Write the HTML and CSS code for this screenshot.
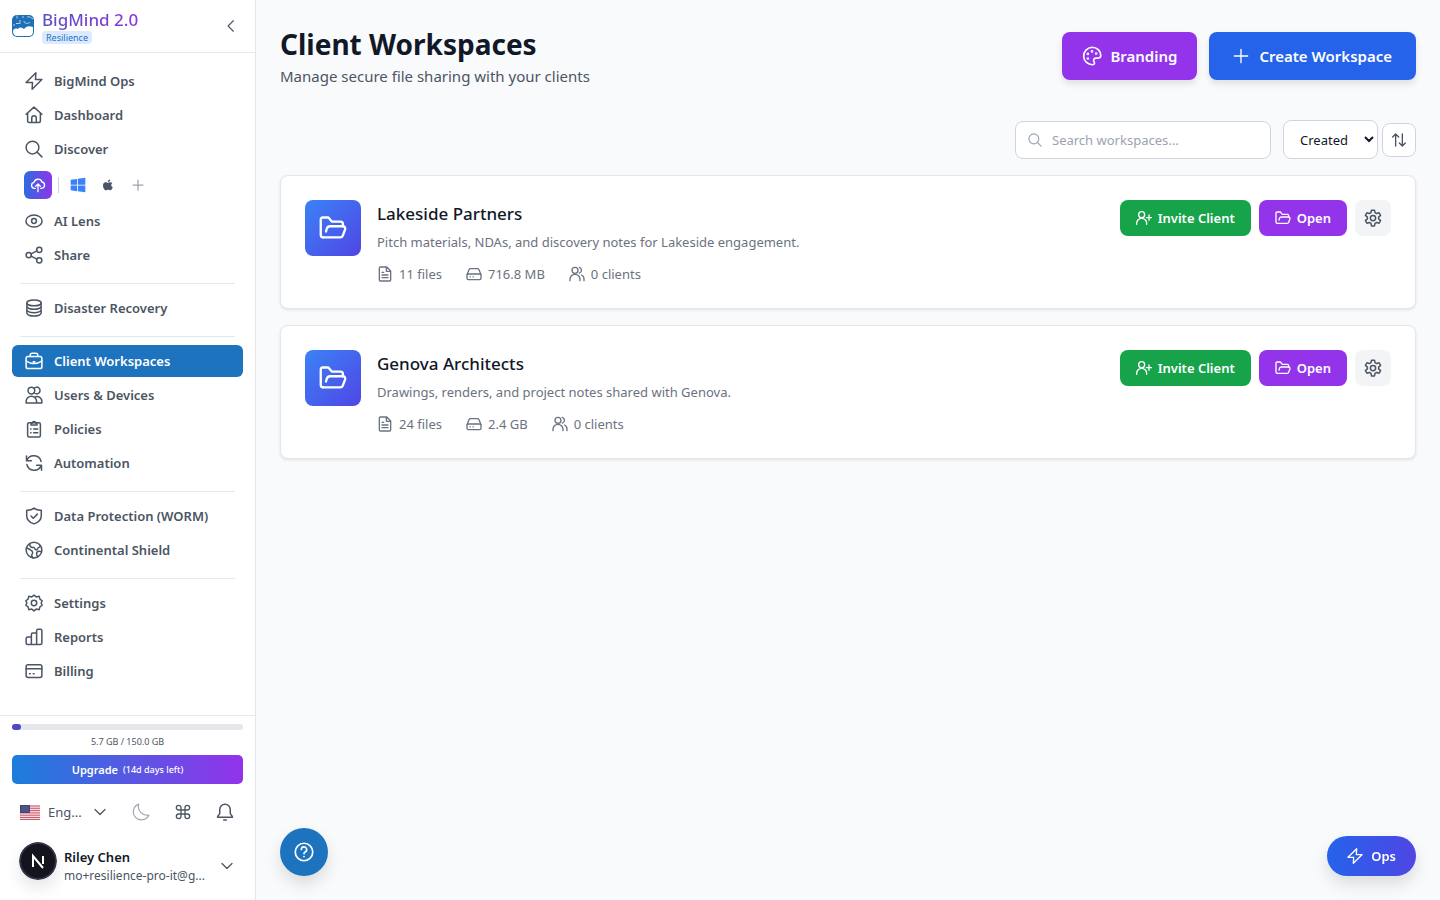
FILE: index.html
```html
<!DOCTYPE html>
<html lang="en">
<head>
    <meta charset="UTF-8">
    <meta name="viewport" content="width=device-width, initial-scale=1.0">
    <title>Client Workspaces - BigMind</title>
    <link rel="stylesheet" href="styles.css">
</head>
<body>
    <!-- Icon sprite -->
    <svg class="sprite" aria-hidden="true">
        <symbol id="i-bolt" viewBox="0 0 24 24"><path d="M14.500 1 1.500 14H10l-.5 9L22.500 10H14z"/></symbol>
        <symbol id="i-home" viewBox="0 0 24 24"><path d="M1.500 11 12 1.500 22.500 11M3.500 9.500V20a2 2 0 0 0 2 2H9v-6a3 3 0 0 1 6 0v6h3.500a2 2 0 0 0 2-2V9.500M9 22h6"/></symbol>
        <symbol id="i-search" viewBox="0 0 24 24"><circle cx="10" cy="10" r="8.500"/><path d="m16 16 6.500 6.500"/></symbol>
        <symbol id="i-cloud-up" viewBox="0 0 24 24"><path d="M8 17H6.500A4.500 4.500 0 0 1 6 8.100 6.200 6.200 0 0 1 17.900 7.500 4.800 4.800 0 0 1 17.500 17H16M12 22V11M8.500 14 12 10.500l3.500 3.500"/></symbol>
        <symbol id="i-windows" viewBox="0 0 24 24"><path fill="currentColor" stroke="none" d="M1 4.200 10.500 2.900V11.500H1zM11.700 2.700 23 1v10.500H11.700zM1 12.600h9.500v8.600L1 19.900zM11.700 12.600H23V23l-11.300-1.600z"/></symbol>
        <symbol id="i-apple" viewBox="0 0 24 24"><path fill="currentColor" stroke="none" d="M16.500 1c.1 2.800-2.200 5.100-4.800 5C11.400 3.400 13.800 1.100 16.500 1zM20.800 8.200c-3.600 2.200-3 7 .8 8.500-1 2.800-3 6-5 6-1.800 0-2.200-1-4.200-1s-2.600 1-4.300 1C5.200 22.700 2 17.300 2 13c0-4.200 2.700-6.500 5.300-6.500 1.900 0 3.400 1.200 4.600 1.200 1.100 0 2.900-1.300 5.100-1.300 1.500 0 2.900.7 3.800 1.800z"/></symbol>
        <symbol id="i-plus" viewBox="0 0 24 24"><path d="M12 2v20M2 12h20"/></symbol>
        <symbol id="i-eye" viewBox="0 0 24 24"><ellipse cx="12" cy="12" rx="10.800" ry="8"/><circle cx="12" cy="12" r="3.200"/></symbol>
        <symbol id="i-share" viewBox="0 0 24 24"><circle cx="5" cy="12" r="3.500"/><circle cx="19" cy="5" r="3.500"/><circle cx="19" cy="19" r="3.500"/><path d="m8.200 10.500 7.600-3.900M8.200 13.500l7.600 3.900"/></symbol>
        <symbol id="i-database" viewBox="0 0 24 24"><ellipse cx="12" cy="5.200" rx="9.500" ry="3.800"/><path d="M2.500 5.200v13.600c0 2.200 4.300 4 9.500 4s9.500-1.800 9.500-4V5.200M2.500 9.800c0 2.200 4.300 4 9.500 4s9.500-1.800 9.500-4M2.500 14.300c0 2.200 4.300 4 9.500 4s9.500-1.800 9.500-4"/></symbol>
        <symbol id="i-briefcase" viewBox="0 0 24 24"><rect x="1.500" y="6" width="21" height="16" rx="2.500"/><path d="M7 6V4a2.500 2.500 0 0 1 2.500-2.500h5A2.500 2.500 0 0 1 17 4v2M1.500 12c6 4.500 15 4.500 21 0M11 13h2"/></symbol>
        <symbol id="i-users" viewBox="0 0 24 24"><circle cx="8.500" cy="6" r="4.500"/><path d="M12 3.200a4.500 4.500 0 1 1 0 5.600M1.500 22.500v-2a7 7 0 0 1 14 0v2zM13.500 14.500a6.500 6.500 0 0 1 9 6v2h-7"/></symbol>
        <symbol id="i-clipboard" viewBox="0 0 24 24"><rect x="3.500" y="3.500" width="17" height="19" rx="2"/><path d="M8 6.500V4h2a2 2 0 0 1 4 0h2v2.500zM11.500 12H17M11.500 17H17M7.500 12h.5M7.500 17h.5"/></symbol>
        <symbol id="i-sync" viewBox="0 0 24 24"><path d="M2 2.500V9h6.500M22 21.500V15h-6.500M2.500 8.500A10 10 0 0 1 21.500 10M21.500 15.500A10 10 0 0 1 2.500 14"/></symbol>
        <symbol id="i-shield" viewBox="0 0 24 24"><path d="M12 1.500c2.500 2 6 3 9.700 2.800v7.200c0 5.500-4 9-9.700 11-5.700-2-9.700-5.500-9.700-11V4.300C6 4.500 9.500 3.500 12 1.500z"/><path d="m8 12 3 3 5.500-5.500"/></symbol>
        <symbol id="i-globe" viewBox="0 0 24 24"><circle cx="12" cy="12" r="10.500"/><path d="M6.500 3.500C6 7 8 9 11 8.500c2-.3 2 3.500 4 3.500s1.500-3 3.500-3.500S20 6 20 6M2 9.500c3 0 4 2 6 3s3 3 1.500 5 0 4 1 5M22 14.500c-2.500-1.500-6-1-6.500 1.500s.5 3.500 1.500 5"/></symbol>
        <symbol id="i-cog" viewBox="0 0 24 24"><path d="m12 1.500 3 2.400 3.900-.8 1 3.700 3 2.200-1.400 3 1.400 3-3 2.200-1 3.700-3.900-.8-3 2.400-3-2.400-3.900.8-1-3.700-3-2.200 1.400-3-1.400-3 3-2.200 1-3.700 3.900.8z"/><circle cx="12" cy="12" r="3.600"/></symbol>
        <symbol id="i-chart" viewBox="0 0 24 24"><path d="M8.500 22V8.500A2 2 0 0 1 10.500 6.500h5M8.500 22H3.500a2 2 0 0 1-2-2v-6a2 2 0 0 1 2-2h5M8.500 22h7M15.500 22V3.500a2 2 0 0 1 2-2h3a2 2 0 0 1 2 2V20a2 2 0 0 1-2 2z"/></symbol>
        <symbol id="i-card" viewBox="0 0 24 24"><rect x="1.500" y="3.500" width="21" height="17" rx="2.500"/><path d="M1.500 9h21M6 15.500h1M11 15.500h1"/></symbol>
        <symbol id="i-left" viewBox="0 0 24 24"><path d="m16 3-9 9 9 9"/></symbol>
        <symbol id="i-down" viewBox="0 0 24 24"><path d="m2 7 10 10L22 7"/></symbol>
        <symbol id="i-moon" viewBox="0 0 24 24"><path d="M9 1.500A10.800 10.800 0 1 0 22.500 16 11.500 11.500 0 0 1 9 1.500z"/></symbol>
        <symbol id="i-command" viewBox="0 0 24 24"><path d="M9 9h6v6H9zM9 9H5.500A3.500 3.500 0 1 1 9 5.500zM15 9V5.500A3.500 3.500 0 1 1 18.500 9zM15 15h3.500a3.500 3.500 0 1 1-3.500 3.500zM9 15v3.500A3.500 3.500 0 1 1 5.500 15z"/></symbol>
        <symbol id="i-bell" viewBox="0 0 24 24"><path d="M12 1.500a7 7 0 0 0-7 7v5c0 2-3 3-3 5.500h20c0-2.500-3-3.500-3-5.500v-5a7 7 0 0 0-7-7zM10.300 22.500h3.400"/></symbol>
        <symbol id="i-palette" viewBox="0 0 24 24"><path d="M12 1.500a10.500 10.500 0 1 0 1 21c2 0 2.500-1.800 1.500-3.500-1.500-2.600 0-4.500 2.500-4.500h2.500c2 0 3-1 3-3C22.500 6 18 1.500 12 1.500z"/><circle cx="7" cy="9.500" r=".6"/><circle cx="12" cy="6.500" r=".6"/><circle cx="17" cy="9" r=".6"/><circle cx="7" cy="15" r=".6"/></symbol>
        <symbol id="i-sort" viewBox="0 0 24 24"><path d="M7 21V3M2.500 7.500 7 3l4.500 4.500M17 3v18M12.500 16.500 17 21l4.500-4.500"/></symbol>
        <symbol id="i-folder" viewBox="0 0 24 24"><path d="M3.500 20A2 2 0 0 1 1.500 18V4.500A1.500 1.500 0 0 1 3 3h5l3 3.500h7.500a2 2 0 0 1 2 2v2"/><path d="M3.500 20h15a2 2 0 0 0 1.900-1.400l2-5.500a2 2 0 0 0-1.900-2.600H9.500a3 3 0 0 0-2.800 2L6 15"/></symbol>
        <symbol id="i-file" viewBox="0 0 24 24"><path d="M14.500 1.500H5A1.500 1.500 0 0 0 3.500 3v18A1.500 1.500 0 0 0 5 22.500h14a1.500 1.500 0 0 0 1.500-1.500V7.500zM14 1.500V8h6.500M7.500 9.500H10M7.500 13.500h9M7.500 17.500h9"/></symbol>
        <symbol id="i-drive" viewBox="0 0 24 24"><path d="M1.500 13 4.500 5.500A2.500 2.500 0 0 1 7 4h10a2.500 2.500 0 0 1 2.500 1.500l3 7.500"/><rect x="1.500" y="12" width="21" height="8.500" rx="2"/><path d="M6 16.300h.5M10.500 16.300h.5"/></symbol>
        <symbol id="i-clients" viewBox="0 0 24 24"><circle cx="9" cy="6.500" r="4.500"/><path d="M1.500 22v-2a7.500 7.500 0 0 1 15 0v2M15.500 2.200a4.500 4.500 0 0 1 0 8.600M19 13.500a7 7 0 0 1 3.500 6.500v2"/></symbol>
        <symbol id="i-invite" viewBox="0 0 24 24"><circle cx="8.500" cy="7" r="4.500"/><path d="M1 21.500V20a7.500 7.500 0 0 1 15 0v1.500M19.500 7.500v8M15.500 11.500h8"/></symbol>
        <symbol id="i-gear" viewBox="0 0 24 24"><path d="m10 1.500-.7 3.400-2.100 1.200-3.300-1.100-2 3.500 2.600 2.300v2.400l-2.600 2.300 2 3.500 3.300-1.100 2.100 1.200.7 3.400h4l.7-3.400 2.100-1.200 3.300 1.100 2-3.500-2.600-2.300v-2.400l2.600-2.300-2-3.500-3.300 1.100-2.100-1.200L14 1.500z"/><circle cx="12" cy="12" r="3.500"/></symbol>
        <symbol id="i-help" viewBox="0 0 24 24"><circle cx="12" cy="12" r="10.500"/><path d="M8.800 9a3.200 3.200 0 1 1 4.500 3c-.9.400-1.300 1-1.300 2M12 17.500v.3"/></symbol>
    </svg>

    <div class="app">
        <aside class="sidebar">
            <header class="brand">
                <svg class="brand-logo" viewBox="0 0 24 24" aria-hidden="true">
                    <rect x="1" y="1" width="22" height="22" rx="5" fill="#1e6fb5"/>
                    <path d="M2 17.500c0-2.500 2.500-3.500 5-2.500 1.800-2.500 4.500-1.500 6 .2 1.500-3 5-3.700 9-2.200v5c0 2.500-1.800 4-4 4H6c-2.500 0-4-2-4-4.500z" fill="#fff"/>
                    <path d="M6 1.500v3M5 9.500h4V6M12 2v2M13 7c0 3 5 3 6 1M16 3c3-1 4 1 6 2M2 11h2" fill="none" stroke="#a9d3f2"/>
                </svg>
                <div class="brand-text">
                    <span class="brand-name">BigMind 2.0</span>
                    <span class="brand-plan">Resilience</span>
                </div>
                <button class="icon-button" aria-label="Collapse sidebar"><svg class="icon icon-14"><use href="#i-left"/></svg></button>
            </header>

            <nav class="nav">
                <div class="nav-group">
                    <a class="nav-item" href="#"><svg class="icon icon-18"><use href="#i-bolt"/></svg>BigMind Ops</a>
                    <a class="nav-item" href="#"><svg class="icon icon-18"><use href="#i-home"/></svg>Dashboard</a>
                    <a class="nav-item" href="#"><svg class="icon icon-18"><use href="#i-search"/></svg>Discover</a>
                    <div class="quick-row">
                        <button class="upload-button" aria-label="Upload"><svg class="icon icon-16"><use href="#i-cloud-up"/></svg></button>
                        <span class="quick-sep"></span>
                        <button class="quick-button windows" aria-label="Windows"><svg class="icon icon-16"><use href="#i-windows"/></svg></button>
                        <button class="quick-button" aria-label="Apple"><svg class="icon icon-12"><use href="#i-apple"/></svg></button>
                        <button class="quick-button more" aria-label="More"><svg class="icon icon-12"><use href="#i-plus"/></svg></button>
                    </div>
                    <a class="nav-item" href="#"><svg class="icon icon-18"><use href="#i-eye"/></svg>AI Lens</a>
                    <a class="nav-item" href="#"><svg class="icon icon-18"><use href="#i-share"/></svg>Share</a>
                </div>
                <div class="nav-group">
                    <a class="nav-item" href="#"><svg class="icon icon-18"><use href="#i-database"/></svg>Disaster Recovery</a>
                </div>
                <div class="nav-group">
                    <a class="nav-item active" href="#"><svg class="icon icon-18"><use href="#i-briefcase"/></svg>Client Workspaces</a>
                    <a class="nav-item" href="#"><svg class="icon icon-18"><use href="#i-users"/></svg>Users &amp; Devices</a>
                    <a class="nav-item" href="#"><svg class="icon icon-18"><use href="#i-clipboard"/></svg>Policies</a>
                    <a class="nav-item" href="#"><svg class="icon icon-18"><use href="#i-sync"/></svg>Automation</a>
                </div>
                <div class="nav-group">
                    <a class="nav-item" href="#"><svg class="icon icon-18"><use href="#i-shield"/></svg>Data Protection (WORM)</a>
                    <a class="nav-item" href="#"><svg class="icon icon-18"><use href="#i-globe"/></svg>Continental Shield</a>
                </div>
                <div class="nav-group">
                    <a class="nav-item" href="#"><svg class="icon icon-18"><use href="#i-cog"/></svg>Settings</a>
                    <a class="nav-item" href="#"><svg class="icon icon-18"><use href="#i-chart"/></svg>Reports</a>
                    <a class="nav-item" href="#"><svg class="icon icon-18"><use href="#i-card"/></svg>Billing</a>
                </div>
            </nav>

            <footer class="sidebar-footer">
                <div class="storage-bar"><div class="storage-fill" style="width: 4%"></div></div>
                <div class="storage-text">5.7 GB / 150.0 GB</div>
                <button class="upgrade-button">Upgrade <small>(14d days left)</small></button>
                <div class="tools">
                    <button class="language">
                        <svg class="flag" viewBox="0 0 20 15" aria-hidden="true">
                            <rect width="20" height="15" rx="1" fill="#f3dfe2"/>
                            <path d="M0 1h20M0 3.300h20M0 5.600h20M0 7.900h20M0 10.200h20M0 12.500h20M0 14.500h20" stroke="#d4546a"/>
                            <rect width="10" height="8" fill="#3f4478"/>
                            <path d="M1.500 2h7M1.500 4h7M1.500 6h7" stroke="#9fa3c6" stroke-width=".7" stroke-dasharray="1 1"/>
                        </svg>
                        <span>Eng...</span>
                        <svg class="icon icon-12"><use href="#i-down"/></svg>
                    </button>
                    <button class="icon-button muted" aria-label="Dark mode"><svg class="icon thin icon-18"><use href="#i-moon"/></svg></button>
                    <button class="icon-button" aria-label="Shortcuts"><svg class="icon icon-16"><use href="#i-command"/></svg></button>
                    <button class="icon-button" aria-label="Notifications"><svg class="icon icon-18"><use href="#i-bell"/></svg></button>
                </div>
                <button class="user">
                    <svg class="avatar" viewBox="0 0 38 38" aria-hidden="true">
                        <circle cx="19" cy="19" r="18" fill="#14141f" stroke="#34344a" stroke-width="2"/>
                        <path d="M14 25V14l10 12M24 14v8" fill="none" stroke="#fff" stroke-width="2"/>
                    </svg>
                    <span class="user-text">
                        <span class="user-name">Riley Chen</span>
                        <span class="user-mail">mo+resilience-pro-it@g...</span>
                    </span>
                    <svg class="icon icon-12"><use href="#i-down"/></svg>
                </button>
            </footer>
        </aside>

        <main class="main">
            <div class="page-header">
                <div>
                    <h1>Client Workspaces</h1>
                    <p class="subtitle">Manage secure file sharing with your clients</p>
                </div>
                <div class="header-actions">
                    <button class="button-lg purple"><svg class="icon icon-20"><use href="#i-palette"/></svg>Branding</button>
                    <button class="button-lg blue"><svg class="icon icon-16"><use href="#i-plus"/></svg>Create Workspace</button>
                </div>
            </div>

            <div class="filters">
                <label class="search">
                    <svg class="icon icon-14"><use href="#i-search"/></svg>
                    <input type="text" placeholder="Search workspaces..." aria-label="Search workspaces">
                </label>
                <div class="sort">
                    <select aria-label="Sort by">
                        <option>Created</option>
                        <option>Name</option>
                    </select>
                    <button class="sort-button" aria-label="Sort direction"><svg class="icon icon-16"><use href="#i-sort"/></svg></button>
                </div>
            </div>

            <div class="cards">
                <article class="card">
                    <div class="card-icon"><svg class="icon icon-28"><use href="#i-folder"/></svg></div>
                    <div class="card-body">
                        <h2>Lakeside Partners</h2>
                        <p>Pitch materials, NDAs, and discovery notes for Lakeside engagement.</p>
                        <div class="stats">
                            <span class="stat"><svg class="icon icon-16"><use href="#i-file"/></svg>11 files</span>
                            <span class="stat"><svg class="icon icon-16"><use href="#i-drive"/></svg>716.8 MB</span>
                            <span class="stat"><svg class="icon icon-16"><use href="#i-clients"/></svg>0 clients</span>
                        </div>
                    </div>
                    <div class="card-actions">
                        <button class="button green"><svg class="icon icon-16"><use href="#i-invite"/></svg>Invite Client</button>
                        <button class="button purple"><svg class="icon icon-16"><use href="#i-folder"/></svg>Open</button>
                        <button class="gear-button" aria-label="Workspace settings"><svg class="icon icon-18"><use href="#i-gear"/></svg></button>
                    </div>
                </article>

                <article class="card">
                    <div class="card-icon"><svg class="icon icon-28"><use href="#i-folder"/></svg></div>
                    <div class="card-body">
                        <h2>Genova Architects</h2>
                        <p>Drawings, renders, and project notes shared with Genova.</p>
                        <div class="stats">
                            <span class="stat"><svg class="icon icon-16"><use href="#i-file"/></svg>24 files</span>
                            <span class="stat"><svg class="icon icon-16"><use href="#i-drive"/></svg>2.4 GB</span>
                            <span class="stat"><svg class="icon icon-16"><use href="#i-clients"/></svg>0 clients</span>
                        </div>
                    </div>
                    <div class="card-actions">
                        <button class="button green"><svg class="icon icon-16"><use href="#i-invite"/></svg>Invite Client</button>
                        <button class="button purple"><svg class="icon icon-16"><use href="#i-folder"/></svg>Open</button>
                        <button class="gear-button" aria-label="Workspace settings"><svg class="icon icon-18"><use href="#i-gear"/></svg></button>
                    </div>
                </article>
            </div>
        </main>
    </div>

    <button class="help-button" aria-label="Help"><svg class="icon icon-20"><use href="#i-help"/></svg></button>
    <button class="ops-button"><svg class="icon icon-16"><use href="#i-bolt"/></svg>Ops</button>
</body>
</html>
```
FILE: styles.css
```css
* {
    box-sizing: border-box;
}

body {
    margin: 0;
    font-family: "Noto Sans", sans-serif;
    font-size: 13px;
    line-height: 20px;
    color: #111827;
    background-color: #f9fafc;
}

h1, h2, p {
    margin: 0;
}

a {
    color: inherit;
    text-decoration: none;
}

button, input, select {
    font: inherit;
    color: inherit;
}

button {
    display: flex;
    align-items: center;
    justify-content: center;
    padding: 0;
    border: none;
    background: none;
    cursor: pointer;
}

/* Icons */
.sprite {
    display: none;
}

.icon {
    flex: none;
    fill: none;
    stroke: currentColor;
    stroke-width: 2;
    stroke-linecap: round;
    stroke-linejoin: round;
}

.icon-12 { width: 12px; height: 12px; stroke-width: 2.5; }
.icon-14 { width: 14px; height: 14px; }
.icon-16 { width: 16px; height: 16px; }
.icon-18 { width: 18px; height: 18px; }
.icon-20 { width: 20px; height: 20px; }
.icon-28 { width: 28px; height: 28px; }

.thin {
    stroke-width: 1.5;
}

/* Layout */
.app {
    display: flex;
    min-height: 100vh;
}

.sidebar {
    display: flex;
    flex-direction: column;
    flex: none;
    width: 256px;
    height: 100vh;
    position: sticky;
    top: 0;
    background-color: #fff;
    border-right: 1px solid #e5e7eb;
    color: #4b5563;
}

.brand {
    display: flex;
    align-items: center;
    gap: 7px;
    height: 53px;
    padding: 0 12px 0 11px;
    border-bottom: 1px solid #e5e7eb;
}

.brand-logo {
    width: 24px;
    height: 24px;
}

.brand-text {
    display: flex;
    flex-direction: column;
    align-items: flex-start;
    flex: 1;
}

.brand-name {
    font-size: 17px;
    line-height: 22px;
    font-weight: 500;
    background: linear-gradient(90deg, #5b50c0, #8a38dc);
    -webkit-background-clip: text;
    background-clip: text;
    color: transparent;
}

.brand-plan {
    padding: 0 4px;
    border-radius: 4px;
    background-color: #dbeafe;
    color: #1e73be;
    font-size: 9px;
    line-height: 13px;
}

.icon-button {
    width: 24px;
    height: 24px;
}

.muted {
    color: #9ca3af;
}

/* Navigation */
.nav {
    flex: 1;
    padding: 12px;
    overflow: hidden;
}

.nav-group {
    display: flex;
    flex-direction: column;
    gap: 2px;
}

.nav-group + .nav-group::before {
    content: "";
    height: 1px;
    margin: 12px 8px 6px;
    background-color: #e5e7eb;
}

.nav-item {
    display: flex;
    align-items: center;
    gap: 11px;
    height: 32px;
    padding: 0 13px;
    border-radius: 6px;
    font-weight: 600;
}

.nav-item.active {
    background-color: #1e73be;
    color: #fff;
}

.quick-row {
    display: flex;
    align-items: center;
    height: 36px;
    padding: 0 12px;
}

.upload-button {
    width: 28px;
    height: 28px;
    border-radius: 6px;
    background: linear-gradient(90deg, #2f6be0, #8b37e6);
    color: #fff;
}

.quick-sep {
    width: 1px;
    height: 16px;
    margin: 0 4px 0 6px;
    background-color: #d1d5db;
}

.quick-button {
    width: 30px;
    height: 24px;
}

.windows {
    color: #3b82f6;
}

.more {
    color: #9ca3af;
}

/* Sidebar footer */
.sidebar-footer {
    padding: 8px 12px 10px;
    border-top: 1px solid #e5e7eb;
}

.storage-bar {
    height: 6px;
    border-radius: 3px;
    background-color: #e5e7eb;
}

.storage-fill {
    height: 6px;
    border-radius: 3px;
    background-color: #4f46c8;
}

.storage-text {
    margin: 4px 0 5px;
    font-size: 9px;
    line-height: 16px;
    text-align: center;
}

.upgrade-button {
    gap: 5px;
    width: 100%;
    height: 29px;
    border-radius: 5px;
    background: linear-gradient(90deg, #1a7edb, #9333ea);
    color: #fff;
    font-size: 11px;
    font-weight: 600;
}

.upgrade-button small {
    font-size: 9px;
    font-weight: 500;
}

.tools {
    display: flex;
    align-items: center;
    gap: 18px;
    height: 32px;
    margin-top: 12px;
    padding: 0 6px 0 8px;
}

.language {
    flex: 1;
    justify-content: flex-start;
    gap: 8px;
}

.language .icon {
    margin-left: 4px;
}

.flag {
    width: 20px;
    height: 15px;
}

.user {
    gap: 7px;
    width: 100%;
    height: 48px;
    margin-top: 14px;
    padding: 0 10px 0 7px;
    text-align: left;
}

.avatar {
    align-self: flex-start;
    width: 38px;
    height: 38px;
    border-radius: 50%;
    box-shadow: 0 8px 16px rgba(0, 0, 0, 0.1);
}

.user-text {
    display: flex;
    flex-direction: column;
    flex: 1;
}

.user-name {
    color: #111827;
    font-weight: 600;
}

.user-mail {
    font-size: 12px;
    line-height: 18px;
}

/* Page */
.main {
    flex: 1;
    padding: 24px;
}

.page-header {
    display: flex;
    align-items: center;
    justify-content: space-between;
}

h1 {
    font-size: 28px;
    line-height: 40px;
    font-weight: 700;
}

.subtitle {
    font-size: 15px;
    line-height: 24px;
    color: #4b5563;
}

.header-actions {
    display: flex;
    gap: 12px;
}

.button-lg {
    gap: 8px;
    height: 48px;
    padding: 0 20px;
    border-radius: 8px;
    color: #fff;
    font-size: 15px;
    font-weight: 600;
    box-shadow: 0 4px 6px rgba(0, 0, 0, 0.1);
}

.button-lg.blue {
    gap: 10px;
    padding: 0 24px;
}

.purple {
    background-color: #9333ea;
}

.blue {
    background-color: #2563eb;
}

.green {
    background-color: #16a34a;
}

.filters {
    display: flex;
    align-items: center;
    justify-content: flex-end;
    gap: 12px;
    margin: 32px 0 16px;
}

.search {
    display: flex;
    align-items: center;
    gap: 10px;
    width: 256px;
    height: 38px;
    padding: 0 12px;
    border: 1px solid #d1d5db;
    border-radius: 8px;
    background-color: #fff;
    color: #9ca3af;
}

.search input {
    flex: 1;
    min-width: 0;
    padding: 0;
    border: none;
    outline: none;
    background: none;
    color: #111827;
}

.search input::placeholder {
    color: #9ca3af;
}

.sort {
    display: flex;
    align-items: center;
    gap: 4px;
}

.sort select {
    width: 95px;
    height: 39px;
    padding: 0 0 0 12px;
    border: 1px solid #d1d5db;
    border-radius: 8px;
    background-color: #fff;
}

.sort-button {
    width: 34px;
    height: 34px;
    border: 1px solid #d1d5db;
    border-radius: 8px;
    background-color: #fff;
    color: #4b5563;
}

/* Workspace cards */
.cards {
    display: flex;
    flex-direction: column;
    gap: 16px;
}

.card {
    display: flex;
    align-items: flex-start;
    gap: 16px;
    padding: 24px;
    border: 1px solid #e5e7eb;
    border-radius: 8px;
    background-color: #fff;
    box-shadow: 0 1px 3px rgba(0, 0, 0, 0.1);
}

.card-icon {
    display: flex;
    align-items: center;
    justify-content: center;
    width: 56px;
    height: 56px;
    border-radius: 8px;
    background: linear-gradient(135deg, #3b82f6, #4f46e5);
    color: #fff;
}

.card-body {
    flex: 1;
    color: #6b7280;
}

.card-body h2 {
    margin-bottom: 4px;
    font-size: 17px;
    line-height: 28px;
    font-weight: 500;
    color: #111827;
}

.stats {
    display: flex;
    gap: 24px;
    margin-top: 12px;
}

.stat {
    display: flex;
    align-items: center;
    gap: 6px;
}

.card-actions {
    display: flex;
    gap: 8px;
}

.button {
    gap: 6px;
    height: 36px;
    padding: 0 16px;
    border-radius: 8px;
    color: #fff;
    font-weight: 600;
}

.gear-button {
    width: 36px;
    height: 36px;
    border-radius: 8px;
    background-color: #f3f4f6;
    color: #4b5563;
}

/* Floating buttons */
.help-button {
    position: fixed;
    left: 280px;
    bottom: 24px;
    width: 48px;
    height: 48px;
    border-radius: 50%;
    background-color: #1e73be;
    color: #fff;
    box-shadow: 0 8px 16px rgba(0, 0, 0, 0.12);
}

.ops-button {
    position: fixed;
    right: 24px;
    bottom: 24px;
    gap: 8px;
    height: 40px;
    padding: 0 20px;
    border-radius: 20px;
    background: linear-gradient(90deg, #2563eb, #4f46e5);
    color: #fff;
    font-weight: 600;
    box-shadow: 0 8px 16px rgba(0, 0, 0, 0.12);
}
```
